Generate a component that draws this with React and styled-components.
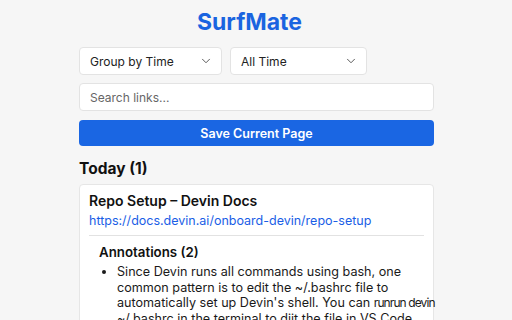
import React from 'react';
import styled, { createGlobalStyle } from 'styled-components';
import { ChevronDown } from 'lucide-react';

const GlobalStyle = createGlobalStyle`
	body {
		margin: 0;
		background: #f6f6f6;
		font-family: Inter, "Noto Sans", Arial, sans-serif;
		color: #1a1a1a;
	}
`;

const Page = styled.div`
	width: 355px;
	margin: 0 0 0 79px;
	padding-top: 9px;
	display: flex;
	flex-direction: column;
`;

const Title = styled.h1`
	margin: 0 0 12px;
	padding-right: 14px;
	text-align: center;
	font-size: 23px;
	line-height: 26px;
	font-weight: 700;
	color: #1a64e0;
`;

const FilterRow = styled.div`
	display: flex;
	gap: 8px;
	margin-bottom: 8px;
`;

const Select = styled.div`
	width: ${(p) => p.$width}px;
	height: 28px;
	box-sizing: border-box;
	display: flex;
	align-items: center;
	justify-content: space-between;
	padding: 0 8px 0 10px;
	background: #fff;
	border: 1px solid #e3e3e3;
	border-radius: 4px;
	font-size: 12px;
	color: #222;
	svg {
		color: #444;
	}
`;

const Search = styled.input`
	height: 28px;
	box-sizing: border-box;
	padding: 0 10px;
	background: #fff;
	border: 1px solid #e3e3e3;
	border-radius: 4px;
	font-family: inherit;
	font-size: 12px;
	margin-bottom: 9px;
	&::placeholder {
		color: #666;
	}
`;

const SaveButton = styled.button`
	height: 26px;
	border: none;
	border-radius: 4px;
	background: #1a66e3;
	color: #fff;
	font-family: inherit;
	font-size: 12.5px;
	font-weight: 600;
`;

const Heading = styled.h2`
	margin: 13px 0 5px;
	font-size: 15.5px;
	line-height: 20px;
	font-weight: 700;
	color: #111;
`;

const Card = styled.div`
	background: #fff;
	border: 1px solid #e6e6e6;
	border-radius: 4px;
	padding: 7px 9px 20px 9px;
`;

const CardTitle = styled.div`
	font-size: 14px;
	line-height: 18px;
	font-weight: 600;
	color: #111;
	margin-bottom: 3px;
`;

const Link = styled.a`
	display: block;
	font-size: 12.5px;
	line-height: 16px;
	color: #1a5ee6;
	text-decoration: none;
`;

const Divider = styled.hr`
	border: none;
	border-top: 1px solid #e2e2e2;
	margin: 6px 0 0;
`;

const Annotations = styled.div`
	padding-left: 10px;
`;

const SubHeading = styled.h3`
	margin: 7px 0 3px;
	font-size: 13.3px;
	line-height: 18px;
	font-weight: 600;
	color: #111;
`;

const List = styled.ul`
	margin: 0;
	padding-left: 18px;
	li {
		font-size: 12.6px;
		line-height: 15.5px;
		color: #1a1a1a;
		white-space: nowrap;
	}
`;

const Tight = styled.span`
	letter-spacing: -0.9px;
	font-size: 12px;
`;

export default function App() {
	return (
		<>
			<GlobalStyle />
			<Page>
				<Title>SurfMate</Title>
				<FilterRow>
					<Select $width={143}>
						Group by Time
						<ChevronDown size={14} strokeWidth={1.5} />
					</Select>
					<Select $width={137}>
						All Time
						<ChevronDown size={14} strokeWidth={1.5} />
					</Select>
				</FilterRow>
				<Search placeholder="Search links..." />
				<SaveButton>Save Current Page</SaveButton>
				<Heading>Today (1)</Heading>
				<Card>
					<CardTitle>Repo Setup – Devin Docs</CardTitle>
					<Link href="#">https://docs.devin.ai/onboard-devin/repo-setup</Link>
					<Divider />
					<Annotations>
						<SubHeading>Annotations (2)</SubHeading>
						<List>
							<li>
								Since Devin runs all commands using bash, one
								<br />
								common pattern is to edit the ~/.bashrc file to
								<br />
								automatically set up Devin's shell. You can <Tight>runrun devin</Tight>
								<br />
								~/.bashrc in the terminal to diit the file in VS Code.
							</li>
						</List>
					</Annotations>
				</Card>
			</Page>
		</>
	);
}
